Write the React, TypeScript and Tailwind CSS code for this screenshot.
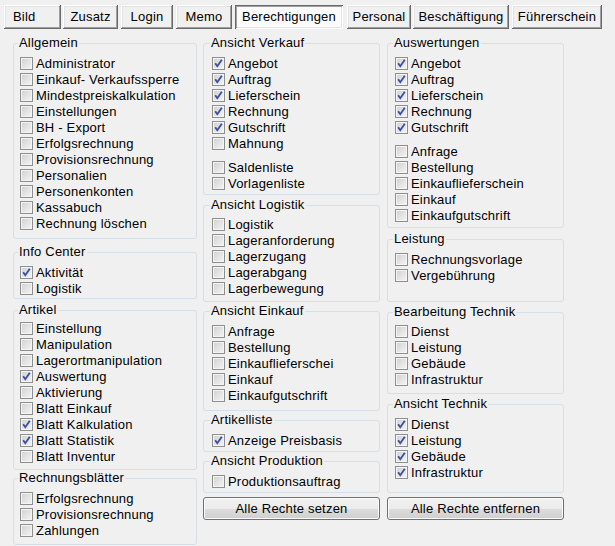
import React from "react"

type Item = { label: string; checked?: boolean; gapBefore?: boolean }

interface GroupProps {
  title: string
  items: Item[]
  cls: string // margins + paddings for this group box
}

const FONT = "font-['Liberation_Sans',Arial,sans-serif]"

const TABS = [
  { label: "Bild", cls: "ml-[4px] w-[57px] justify-start pl-[9px]" },
  { label: "Zusatz", cls: "ml-[2px] w-[55px] justify-center" },
  { label: "Login", cls: "ml-[3px] w-[52px] justify-center" },
  { label: "Memo", cls: "ml-[3px] w-[56px] justify-center" },
  { label: "Berechtigungen", cls: "ml-[3px] w-[108px] justify-center", active: true },
  { label: "Personal", cls: "ml-[4px] w-[64px] justify-center" },
  { label: "Beschäftigung", cls: "ml-[2px] w-[96px] justify-center" },
  { label: "Führerschein", cls: "ml-[3px] w-[90px] justify-center" },
]

function CheckBox({ checked }: { checked?: boolean }) {
  return (
    <span className="flex h-[13px] w-[13px] shrink-0 items-center justify-center border border-[#8e8f8f] bg-[linear-gradient(135deg,#d0d0d0,#f5f5f5)] shadow-[inset_1px_1px_0_#f4f4f4,inset_-1px_-1px_0_#f4f4f4]">
      {checked && (
        <svg width="11" height="11" viewBox="0 0 11 11">
          <polyline points="2.2,5.2 4.3,8.2 8.8,1.8" fill="none" stroke="#3a52a3" strokeWidth="1.9" />
        </svg>
      )}
    </span>
  )
}

function Group({ title, items, cls }: GroupProps) {
  return (
    <fieldset className={`rounded-[3px] border border-[#d5dfe5] ${cls}`}>
      <legend className="-ml-[2px] px-[1px] text-[13px] leading-[14px] tracking-[0.2px] text-black">{title}</legend>
      {items.map((it) => (
        <label
          key={it.label}
          className={`flex h-[16px] items-center gap-[3px] text-[13px] leading-[16px] tracking-[0.2px] text-black ${it.gapBefore ? "mt-[8px]" : ""}`}
        >
          <CheckBox checked={it.checked} />
          <span className="whitespace-nowrap pt-[1px]">{it.label}</span>
        </label>
      ))}
    </fieldset>
  )
}

function ActionButton({ label }: { label: string }) {
  return (
    <button className="mt-[4px] flex h-[23px] w-full items-center justify-center rounded-[3px] border border-[#707070] bg-[linear-gradient(#f2f2f2,#ebebeb_50%,#dddddd_50%,#cfcfcf)] text-[13px] tracking-[0.2px] text-black shadow-[inset_0_0_0_1px_#fcfcfc]">
      {label}
    </button>
  )
}

const items = (labels: string[], checked = false): Item[] => labels.map((label) => ({ label, checked }))

export default function App() {
  return (
    <div className={`h-[546px] w-[615px] overflow-hidden bg-[#f0f0f0] ${FONT}`}>
      {/* tab buttons */}
      <div className="flex pt-[5px]">
        {TABS.map((t) => (
          <button
            key={t.label}
            className={`flex h-[24px] items-center text-[13px] tracking-[0.2px] text-black ${t.cls} ${
              t.active
                ? "bg-[#fbfbfb] shadow-[inset_1px_1px_0_#696969,inset_-1px_-1px_0_#ffffff,inset_2px_2px_0_#a0a0a0,inset_-2px_-2px_0_#e3e3e3]"
                : "bg-[#f0f0f0] shadow-[inset_-1px_-1px_0_#696969,inset_1px_1px_0_#ffffff,inset_-2px_-2px_0_#a0a0a0,inset_2px_2px_0_#e3e3e3]"
            }`}
          >
            {t.label}
          </button>
        ))}
      </div>

      <div className="mt-[7px] flex items-start pl-[13px]">
        {/* column 1 */}
        <div className="flex w-[184px] flex-col">
          <Group
            title="Allgemein"
            cls="pl-[6px] pt-[5px] pb-[7px]"
            items={items([
              "Administrator",
              "Einkauf- Verkaufssperre",
              "Mindestpreiskalkulation",
              "Einstellungen",
              "BH - Export",
              "Erfolgsrechnung",
              "Provisionsrechnung",
              "Personalien",
              "Personenkonten",
              "Kassabuch",
              "Rechnung löschen",
            ])}
          />
          <Group
            title="Info Center"
            cls="mt-[6px] pl-[6px] pt-[5px] pb-[2px]"
            items={[{ label: "Aktivität", checked: true }, { label: "Logistik" }]}
          />
          <Group
            title="Artikel"
            cls="mt-[4px] pl-[6px] pt-[3px] pb-[5px]"
            items={[
              { label: "Einstellung" },
              { label: "Manipulation" },
              { label: "Lagerortmanipulation" },
              { label: "Auswertung", checked: true },
              { label: "Aktivierung" },
              { label: "Blatt Einkauf" },
              { label: "Blatt Kalkulation", checked: true },
              { label: "Blatt Statistik", checked: true },
              { label: "Blatt Inventur" },
            ]}
          />
          <Group
            title="Rechnungsblätter"
            cls="mt-[1px] pl-[6px] pt-[5px] pb-[6px]"
            items={items(["Erfolgsrechnung", "Provisionsrechnung", "Zahlungen"])}
          />
        </div>

        {/* column 2 */}
        <div className="ml-[6px] flex w-[177px] flex-col">
          <Group
            title="Ansicht Verkauf"
            cls="pl-[8px] pt-[5px] pb-[3px]"
            items={[
              ...items(["Angebot", "Auftrag", "Lieferschein", "Rechnung", "Gutschrift"], true),
              { label: "Mahnung" },
              { label: "Saldenliste", gapBefore: true },
              { label: "Vorlagenliste" },
            ]}
          />
          <Group
            title="Ansicht Logistik"
            cls="mt-[3px] pl-[8px] pt-[4px] pb-[5px]"
            items={items(["Logistik", "Lageranforderung", "Lagerzugang", "Lagerabgang", "Lagerbewegung"])}
          />
          <Group
            title="Ansicht Einkauf"
            cls="mt-[2px] pl-[8px] pt-[5px] pb-[7px]"
            items={items(["Anfrage", "Bestellung", "Einkauflieferschei", "Einkauf", "Einkaufgutschrift"])}
          />
          <Group
            title="Artikelliste"
            cls="mt-[2px] pl-[8px] pt-[5px] pb-[3px]"
            items={[{ label: "Anzeige Preisbasis", checked: true }]}
          />
          <Group
            title="Ansicht Produktion"
            cls="mt-[2px] pl-[8px] pt-[5px] pb-[3px]"
            items={[{ label: "Produktionsauftrag" }]}
          />
          <ActionButton label="Alle Rechte setzen" />
        </div>

        {/* column 3 */}
        <div className="ml-[7px] flex w-[177px] flex-col">
          <Group
            title="Auswertungen"
            cls="pl-[7px] pt-[5px] pb-[4px]"
            items={[
              ...items(["Angebot", "Auftrag", "Lieferschein", "Rechnung", "Gutschrift"], true),
              { label: "Anfrage", gapBefore: true },
              { label: "Bestellung" },
              { label: "Einkauflieferschein" },
              { label: "Einkauf" },
              { label: "Einkaufgutschrift" },
            ]}
          />
          <Group
            title="Leistung"
            cls="mt-[4px] pl-[7px] pt-[5px] pb-[18px]"
            items={items(["Rechnungsvorlage", "Vergebührung"])}
          />
          <Group
            title="Bearbeitung Technik"
            cls="mt-[3px] pl-[7px] pt-[4px] pb-[6px]"
            items={items(["Dienst", "Leistung", "Gebäude", "Infrastruktur"])}
          />
          <Group
            title="Ansicht Technik"
            cls="mt-[3px] pl-[7px] pt-[5px] pb-[12px]"
            items={items(["Dienst", "Leistung", "Gebäude", "Infrastruktur"], true)}
          />
          <ActionButton label="Alle Rechte entfernen" />
        </div>
      </div>
    </div>
  )
}
